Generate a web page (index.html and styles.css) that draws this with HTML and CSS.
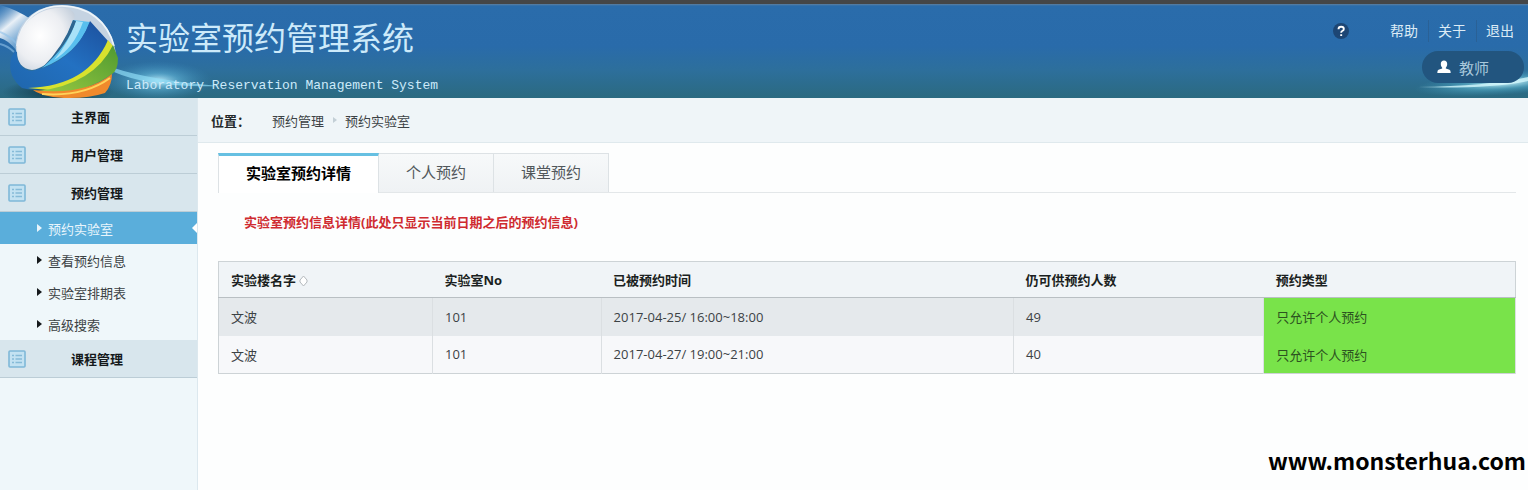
FILE: index.html
```html
<!DOCTYPE html>
<html lang="zh-CN">
<head>
    <meta charset="UTF-8">
    <meta name="viewport" content="width=device-width, initial-scale=1.0">
    <title>实验室预约管理系统</title>
    <link rel="stylesheet" href="styles.css">
</head>
<body>
    <svg class="defs" width="0" height="0" aria-hidden="true">
        <symbol id="icon-list" viewBox="0 0 18 18">
            <rect x="1" y="1" width="16" height="16" rx="1" fill="#c3e2f2" stroke="#7fb8d8" stroke-width="1.6"/>
            <path d="M4 5.5h2M7.5 5.5h6.5M4 9h2M7.5 9h6.5M4 12.5h2M7.5 12.5h6.5" stroke="#86bbd8" stroke-width="1.3"/>
        </symbol>
    </svg>

    <header class="top">
        <svg class="logo" viewBox="0 4 240 94" aria-hidden="true">
            <defs>
                <linearGradient id="beam" x1="0" y1="0" x2="0.6" y2="1">
                    <stop offset="0" stop-color="#4d8fc9" stop-opacity="0.3"/>
                    <stop offset="0.45" stop-color="#ffffff" stop-opacity="0.9"/>
                    <stop offset="1" stop-color="#7db6e2" stop-opacity="0.5"/>
                </linearGradient>
                <radialGradient id="pearl" cx="0.4" cy="0.45" r="0.7">
                    <stop offset="0" stop-color="#ffffff"/>
                    <stop offset="0.6" stop-color="#eceef2"/>
                    <stop offset="1" stop-color="#c3cedb"/>
                </radialGradient>
                <linearGradient id="blue" x1="1" y1="0" x2="0" y2="1">
                    <stop offset="0" stop-color="#1c4f9c"/>
                    <stop offset="0.5" stop-color="#2371c2"/>
                    <stop offset="1" stop-color="#1f66ac"/>
                </linearGradient>
                <linearGradient id="green" x1="1" y1="0" x2="0" y2="1">
                    <stop offset="0" stop-color="#4f9a30"/>
                    <stop offset="1" stop-color="#9ccb42"/>
                </linearGradient>
                <radialGradient id="flare">
                    <stop offset="0" stop-color="#c9f4ff" stop-opacity="0.95"/>
                    <stop offset="0.4" stop-color="#6cc3e6" stop-opacity="0.5"/>
                    <stop offset="1" stop-color="#3c8fc4" stop-opacity="0"/>
                </radialGradient>
                <radialGradient id="shade">
                    <stop offset="0" stop-color="#0c3240" stop-opacity="0.9"/>
                    <stop offset="1" stop-color="#0c3240" stop-opacity="0"/>
                </radialGradient>
            </defs>
            <path d="M0 5Q18 10 32 20L16 50Q8 40 0 38Z" fill="url(#beam)"/>
            <path d="M0 32Q10 36 17 44M0 44Q8 46 14 52" stroke="#8fc2ea" stroke-width="2" fill="none" opacity="0.6"/>
            <ellipse cx="58" cy="92" rx="56" ry="13" fill="url(#shade)"/>
            <ellipse cx="158" cy="81" rx="54" ry="20" fill="url(#flare)"/>
            <path d="M114 68Q150 80 220 86Q150 88 114 72Z" fill="#8fdcf5" opacity="0.7"/>
            <path d="M16 52C14 22 36 5 62 5C92 5 112 24 116 54L106 40L88 22Z" fill="#c5d3e2"/>
            <path d="M17 46C21 18 40 6 62 6C88 6 108 22 114 46" fill="none" stroke="#eef5fa" stroke-width="1.6"/>
            <path d="M17 52C15 26 38 6 64 8Q80 11 72 23C66 45 50 68 32 70C22 69 17 62 17 52Z" fill="url(#pearl)"/>
            <path d="M73 20L90 22Q78 54 42 68Q64 48 73 20Z" fill="#58bfee"/>
            <path d="M76 21L83 22Q74 48 54 60Q68 44 76 21Z" fill="#a9e2f8"/>
            <path d="M73 20L76 21Q68 46 42 68Q64 46 73 20Z" fill="#2e6690"/>
            <path d="M90 21L108 41Q96 72 60 86Q36 92 22 88Q7 76 11 58Q13 54 16 50Q17 70 32 71Q75 62 90 21Z" fill="url(#blue)"/>
            <path d="M108 40L113 46Q100 76 58 91L28 88Q88 86 108 40Z" fill="#d8e22e"/>
            <path d="M113 45L118 58Q118 70 112 74Q90 90 56 95L38 91Q94 84 113 45Z" fill="url(#green)"/>
            <path d="M112 74Q112 85 105 93Q90 98 70 98Q45 98 33 90Q84 96 112 74Z" fill="#f08a2c"/>
            <path d="M42 94Q84 97 110 78" fill="none" stroke="#ffd35a" stroke-width="2"/>
        </svg>
        <div class="brand">
            <h1>实验室预约管理系统</h1>
            <p>Laboratory Reservation Management System</p>
        </div>
        <svg class="streak" viewBox="0 0 200 40" aria-hidden="true">
            <defs>
                <radialGradient id="streakglow">
                    <stop offset="0" stop-color="#d8fbff" stop-opacity="0.95"/>
                    <stop offset="0.5" stop-color="#62bfd8" stop-opacity="0.45"/>
                    <stop offset="1" stop-color="#3f9cbc" stop-opacity="0"/>
                </radialGradient>
            </defs>
            <ellipse cx="176" cy="25" rx="90" ry="12" fill="url(#streakglow)" transform="rotate(-4 176 25)"/>
            <path d="M90 29Q160 28 200 19V23Q160 31 90 29Z" fill="#d3f8fc" opacity="0.8"/>
        </svg>
        <div class="account">
            <nav class="links">
                <svg class="help" viewBox="0 0 16 16" aria-hidden="true">
                    <circle cx="8" cy="8" r="8" fill="#1d4674"/>
                    <path d="M5.5 6.2Q5.5 3.8 8.2 3.8Q10.8 3.8 10.8 5.9Q10.8 7.3 9.2 8Q8.2 8.5 8.2 9.8M8.2 11.2V13" fill="none" stroke="#fff" stroke-width="1.9"/>
                </svg>
                <a href="#">帮助</a>
                <a href="#">关于</a>
                <a href="#">退出</a>
            </nav>
            <div class="user">
                <svg class="person" viewBox="0 0 14 14" aria-hidden="true">
                    <path d="M7 0.5C9 0.5 10.2 2 10.2 4C10.2 5.7 9.5 7 8.8 7.7V8.6L12.5 9.8Q13.7 10.4 13.7 13H0.3Q0.3 10.4 1.5 9.8L5.2 8.6V7.7C4.5 7 3.8 5.7 3.8 4C3.8 2 5 0.5 7 0.5Z" fill="#fff"/>
                </svg>
                <span>教师</span>
            </div>
        </div>
    </header>

    <div class="container">
        <aside class="sidebar">
            <a href="#" class="menu-title"><svg><use href="#icon-list"/></svg>主界面</a>
            <a href="#" class="menu-title"><svg><use href="#icon-list"/></svg>用户管理</a>
            <a href="#" class="menu-title"><svg><use href="#icon-list"/></svg>预约管理</a>
            <ul>
                <li class="active"><a href="#">预约实验室</a></li>
                <li><a href="#">查看预约信息</a></li>
                <li><a href="#">实验室排期表</a></li>
                <li><a href="#">高级搜索</a></li>
            </ul>
            <a href="#" class="menu-title"><svg><use href="#icon-list"/></svg>课程管理</a>
        </aside>

        <main>
            <div class="place">
                <b>位置：</b>
                <a href="#">预约管理</a>
                <i></i>
                <a href="#">预约实验室</a>
            </div>

            <div class="content">
                <div class="tabs">
                    <a href="#" class="selected">实验室预约详情</a>
                    <a href="#">个人预约</a>
                    <a href="#">课堂预约</a>
                </div>
                <p class="notice">实验室预约信息详情(此处只显示当前日期之后的预约信息)</p>

                <table>
                    <thead>
                        <tr>
                            <th class="col-building">实验楼名字<svg class="sort" viewBox="0 0 9 12" aria-hidden="true"><path d="M1 5L4.5 1L8 5V7L4.5 11L1 7Z" fill="#fff" stroke="#b4b9bd"/></svg></th>
                            <th class="col-room">实验室No</th>
                            <th class="col-time">已被预约时间</th>
                            <th class="col-count">仍可供预约人数</th>
                            <th>预约类型</th>
                        </tr>
                    </thead>
                    <tbody>
                        <tr>
                            <td>文波</td>
                            <td>101</td>
                            <td>2017-04-25/ 16:00~18:00</td>
                            <td>49</td>
                            <td class="personal">只允许个人预约</td>
                        </tr>
                        <tr>
                            <td>文波</td>
                            <td>101</td>
                            <td>2017-04-27/ 19:00~21:00</td>
                            <td>40</td>
                            <td class="personal">只允许个人预约</td>
                        </tr>
                    </tbody>
                </table>
            </div>
            <div class="site">www.monsterhua.com</div>
        </main>
    </div>
</body>
</html>
```

FILE: styles.css
```css
* {
    box-sizing: border-box;
}

body {
    margin: 0;
    min-height: 100vh;
    display: flex;
    flex-direction: column;
    font-family: "Open Sans", "Noto Sans CJK SC", sans-serif;
    font-size: 13px;
    color: #3c4245;
    background: #fdfefe;
}

a {
    color: inherit;
    text-decoration: none;
}

.defs {
    position: absolute;
}

/* Header */
.top {
    position: relative;
    display: flex;
    justify-content: space-between;
    height: 98px;
    border-top: 4px solid #454647;
    background: linear-gradient(#5d7fa0 0, #2a6cab 2px, #296baa 45%, #2d6f9c 70%, #2b6a80 100%);
    overflow: hidden;
}

.logo {
    position: absolute;
    left: 0;
    bottom: 0;
    width: 240px;
    height: 94px;
}

.streak {
    position: absolute;
    right: 0;
    bottom: 0;
    width: 200px;
    height: 40px;
}

.brand {
    position: relative;
    padding: 10px 0 0 126px;
    color: #cdeafa;
}

.brand h1 {
    margin: 0;
    font-size: 32px;
    font-weight: 400;
    line-height: 48px;
}

.brand p {
    margin: 12px 0 0;
    font-family: "Liberation Mono", monospace;
    font-size: 13px;
    line-height: 24px;
    white-space: nowrap;
}

.account {
    position: relative;
    display: flex;
    flex-direction: column;
    align-items: flex-end;
    padding-top: 16px;
}

.links {
    display: flex;
    align-items: center;
    padding-right: 4px;
    font-size: 14px;
    line-height: 22px;
    color: #dcebf6;
}

.links a {
    padding: 0 10px 0 9px;
}

.links a + a {
    border-left: 1px solid #2a6196;
}

.help {
    width: 16px;
    height: 16px;
    margin-right: 32px;
}

.user {
    display: flex;
    align-items: center;
    gap: 8px;
    width: 102px;
    height: 32px;
    margin: 9px 4px 0 0;
    padding-left: 15px;
    border-radius: 16px;
    font-size: 15px;
    color: #a9c9dc;
    background: #22557f;
}

.person {
    width: 14px;
    height: 14px;
}

/* Sidebar */
.container {
    flex: 1;
    display: flex;
}

.sidebar {
    flex: none;
    width: 198px;
    background: #eff7fa;
    border-right: 1px solid #dce8ee;
}

.menu-title {
    display: flex;
    align-items: center;
    height: 38px;
    padding-left: 8px;
    font-weight: bold;
    color: #15191b;
    background: #d8e6ed;
    border-bottom: 1px solid #bccdd6;
}

.menu-title svg {
    width: 18px;
    height: 18px;
    margin-right: 45px;
}

.sidebar ul {
    margin: 0;
    padding: 0;
    list-style: none;
}

.sidebar li {
    position: relative;
}

.sidebar li a {
    display: flex;
    align-items: center;
    height: 32px;
    padding-left: 37px;
}

.sidebar li a::before {
    content: "";
    margin-right: 6px;
    border: 4px solid transparent;
    border-left: 5px solid #15191b;
    border-right: 0;
}

.sidebar li.active a {
    color: #e8f5fc;
    background: #5aaedb;
}

.sidebar li.active a::before {
    border-left-color: #e8f5fc;
}

.sidebar li.active::after {
    content: "";
    position: absolute;
    right: 0;
    top: 11px;
    border: 5px solid transparent;
    border-right-color: #fff;
    border-left: 0;
}

/* Main area */
main {
    flex: 1;
    display: flex;
    flex-direction: column;
}

.place {
    display: flex;
    align-items: center;
    height: 45px;
    padding-left: 13px;
    background: #eff5f8;
    border-bottom: 1px solid #dfe9ed;
}

.place b {
    width: 61px;
    color: #24292b;
}

.place i {
    margin: 0 8px 0 9px;
    border: 3px solid transparent;
    border-left: 4px solid #c3cfd6;
    border-right: 0;
}

.content {
    padding: 10px 12px 0 20px;
}

.tabs {
    display: flex;
    border-bottom: 1px solid #e3e7e9;
}

.tabs a {
    height: 39px;
    padding: 0 27px;
    font-size: 15px;
    line-height: 37px;
    color: #51575b;
    background: linear-gradient(#f7f9fa, #eff2f4);
    border: 1px solid #dde2e5;
    border-left: 0;
    border-bottom: 0;
}

.tabs .selected {
    height: 40px;
    margin-bottom: -1px;
    font-weight: bold;
    line-height: 35px;
    color: #000;
    background: #fff;
    border-top: 3px solid #66c0e2;
    border-left: 1px solid #dde2e5;
}

.notice {
    margin: 17px 0 26px 26px;
    font-weight: bold;
    line-height: 25px;
    color: #cf2b30;
}

table {
    width: 100%;
    table-layout: fixed;
    border-collapse: collapse;
    border: 1px solid #cdd3d6;
}

th {
    height: 36px;
    padding: 0 12px;
    text-align: left;
    color: #1b1f21;
    background: #f0f4f7;
    border-bottom: 1px solid #b9bfc3;
}

td {
    height: 38px;
    padding: 0 12px;
    border-right: 1px solid #dbdfe2;
}

tbody tr {
    background: #f7f8fa;
}

tbody tr:nth-child(odd) {
    background: #e5e9ec;
}

.col-building {
    width: 16.5%;
}

.col-room {
    width: 13%;
}

.col-time {
    width: 31.8%;
}

.col-count {
    width: 19.3%;
}

.sort {
    width: 9px;
    height: 12px;
    margin-left: 3px;
    vertical-align: -2px;
}

.personal {
    color: #2c5220;
    background: #79e34a;
}

.site {
    margin-top: auto;
    padding: 0 2px 12px;
    font-family: "Noto Sans CJK SC", sans-serif;
    font-size: 23px;
    font-weight: bold;
    line-height: 36px;
    text-align: right;
    color: #000;
}
```
